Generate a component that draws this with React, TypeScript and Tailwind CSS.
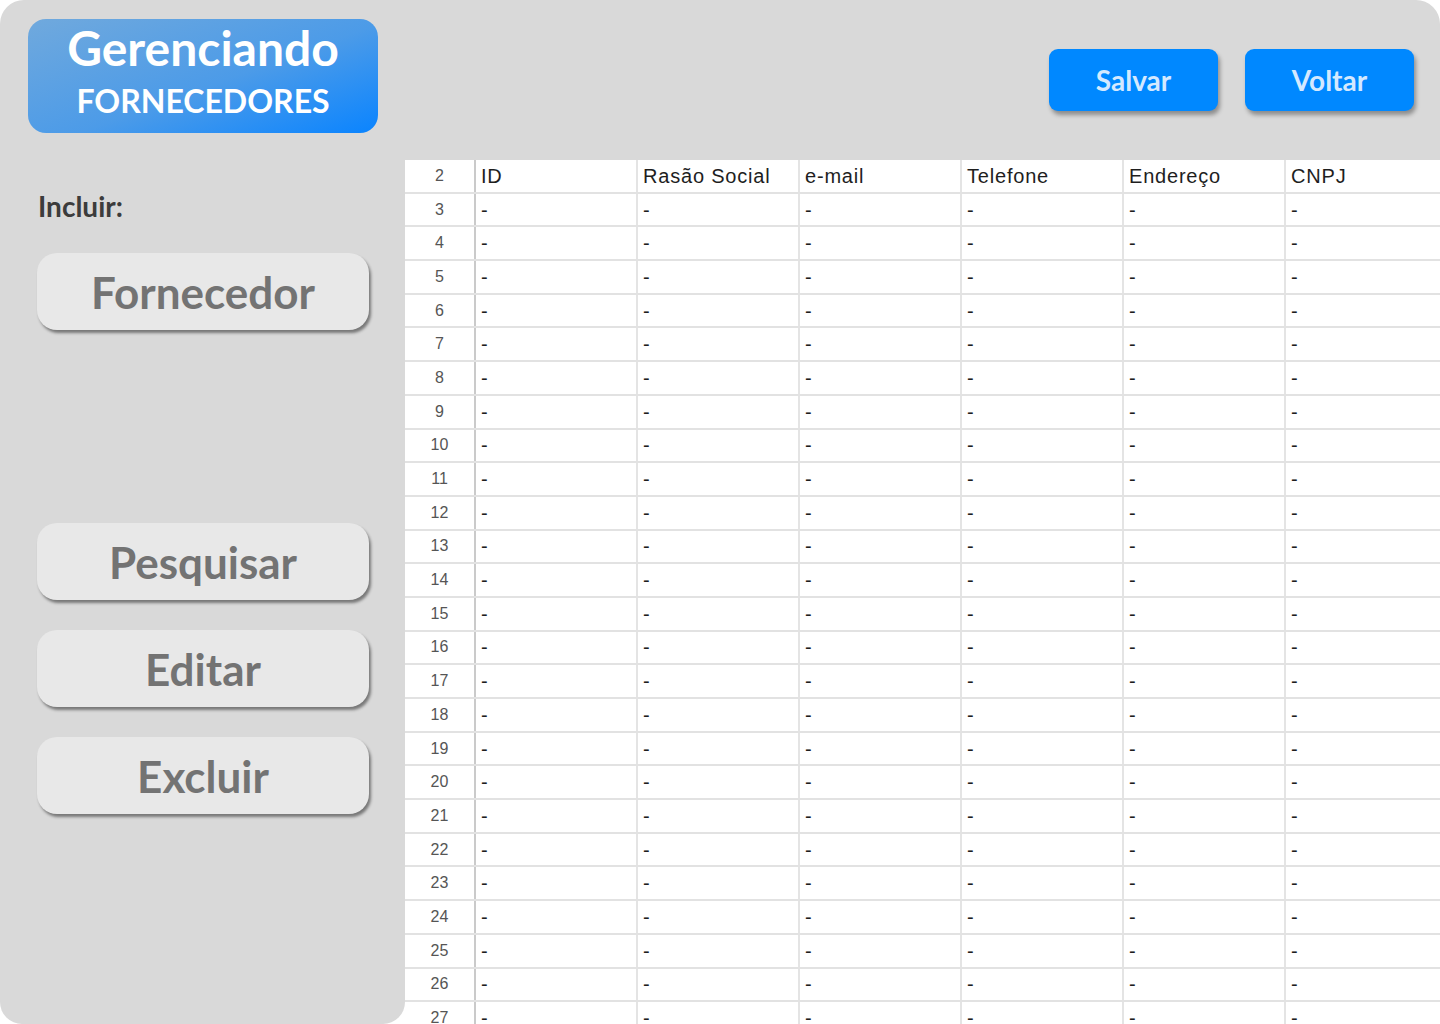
import React from 'react'

const columns = ['ID', 'Rasão Social', 'e-mail', 'Telefone', 'Endereço', 'CNPJ']
const rowNumbers = Array.from({ length: 26 }, (_, i) => i + 3)

function SideButton({ label, className = '' }: { label: string; className?: string }) {
  return (
    <button
      className={`ml-[37px] w-[332px] h-[77px] rounded-[20px] bg-[#e8e8e8] shadow-[2px_3px_3px_rgba(0,0,0,0.45)] text-[44px] font-bold text-[#737373] leading-none flex items-center justify-center ${className}`}
    >
      {label}
    </button>
  )
}

function TopButton({ label }: { label: string }) {
  return (
    <button className="w-[169px] h-[62px] rounded-[9px] bg-[#0088ff] shadow-[2px_4px_4px_rgba(0,0,0,0.35)] text-[28px] font-bold text-[#d4e9ff] flex items-center justify-center">
      {label}
    </button>
  )
}

function Row({ num, cells, header = false }: { num: number; cells: string[]; header?: boolean }) {
  return (
    <div className="flex h-[33.7px] border-b-2 border-[#e2e2e2]">
      <div className="w-[71px] shrink-0 border-r-2 border-[#cacaca] flex items-center justify-center text-[16px] text-[#555]">
        {num}
      </div>
      {cells.map((c, i) => (
        <div
          key={i}
          className={`w-[162px] shrink-0 border-r-2 border-[#e4e4e4] pl-[5px] flex items-center text-[#1e1e1e] ${
            header ? 'text-[20px] tracking-[0.04em]' : 'text-[20px]'
          }`}
        >
          {c}
        </div>
      ))}
    </div>
  )
}

export default function App() {
  return (
    <div className="w-[1440px] h-[1024px] bg-white overflow-hidden font-['Lato',sans-serif]">
      <header className="h-[160px] bg-[#d9d9d9] rounded-t-[24px] flex justify-between">
        <div className="ml-[28px] mt-[19px] w-[350px] h-[114px] rounded-[18px] bg-[linear-gradient(160deg,#70a9dd_0%,#4c9be8_55%,#0a84ff_100%)] flex flex-col items-center pt-[1px] text-white font-bold">
          <span className="text-[48px] leading-[56px]">Gerenciando</span>
          <span className="mt-[5px] text-[32px] leading-[40px]">FORNECEDORES</span>
        </div>
        <div className="mt-[49px] mr-[26px] flex gap-[27px] h-[62px]">
          <TopButton label="Salvar" />
          <TopButton label="Voltar" />
        </div>
      </header>
      <div className="flex h-[864px]">
        <aside className="w-[405px] shrink-0 bg-[#d9d9d9] rounded-b-[22px] flex flex-col">
          <div className="ml-[38px] mt-[29px] h-[34px] leading-[34px] text-[28px] font-bold text-[#3c3c3c]">
            Incluir:
          </div>
          <SideButton label="Fornecedor" className="mt-[30px]" />
          <SideButton label="Pesquisar" className="mt-[193px]" />
          <SideButton label="Editar" className="mt-[30px]" />
          <SideButton label="Excluir" className="mt-[30px]" />
        </aside>
        <div className="flex-1 overflow-hidden bg-white font-['Liberation_Sans',Arial,sans-serif]">
          <Row num={2} cells={columns} header />
          {rowNumbers.map((n) => (
            <Row key={n} num={n} cells={columns.map(() => '-')} />
          ))}
        </div>
      </div>
    </div>
  )
}
